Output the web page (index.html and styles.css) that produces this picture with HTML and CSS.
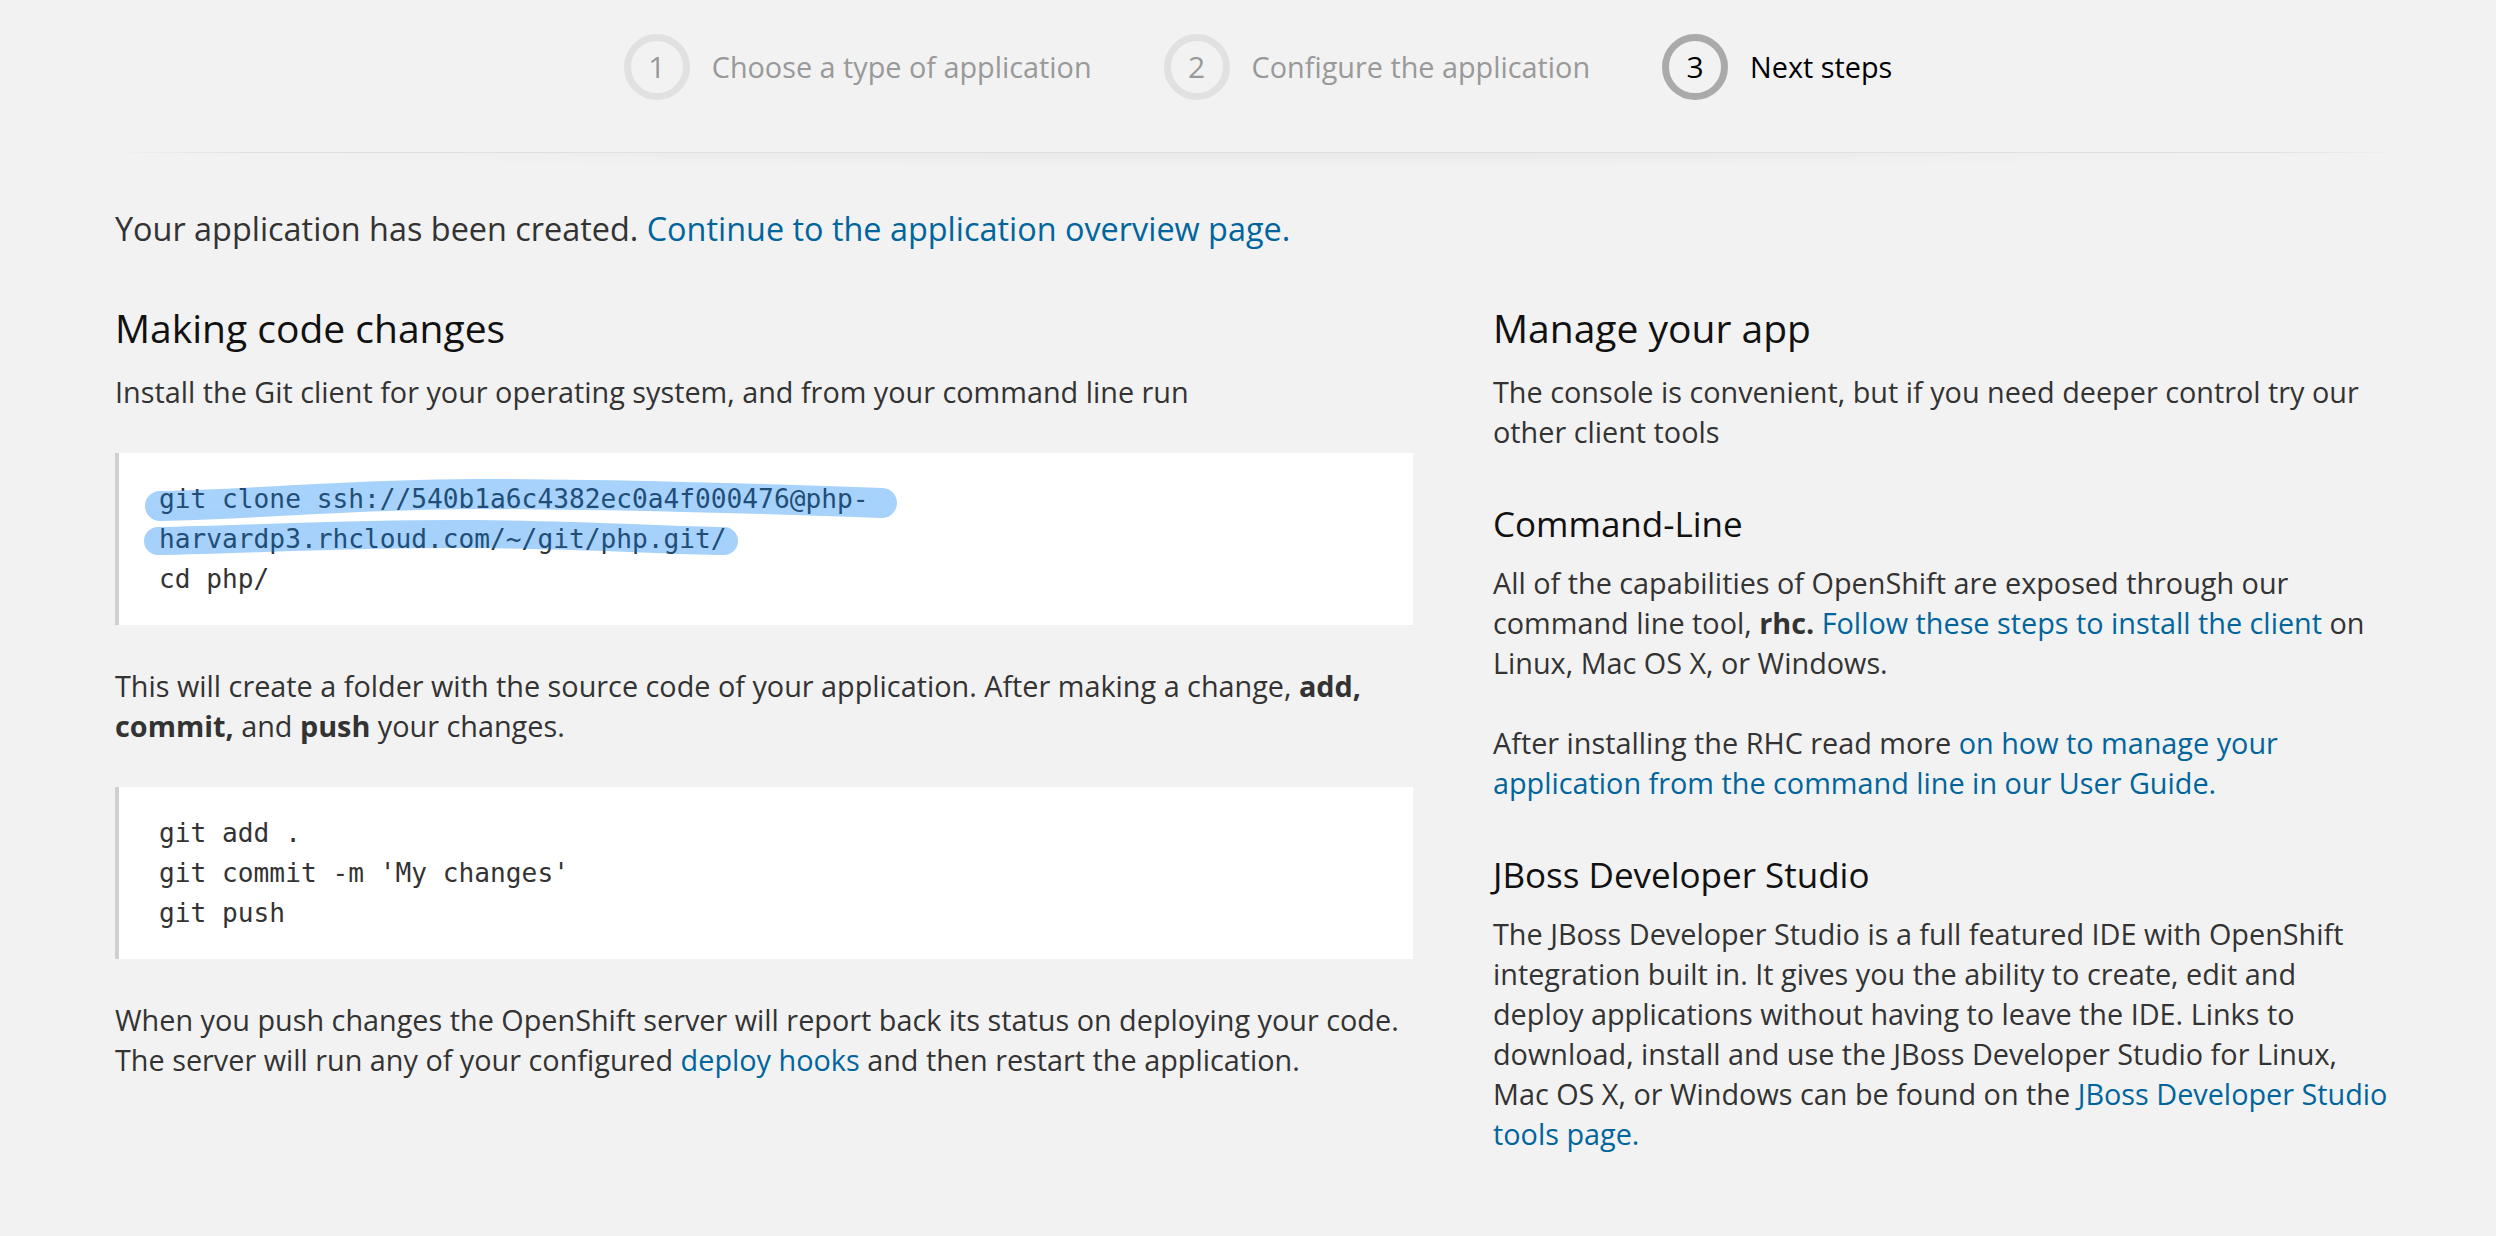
FILE: index.html
```html
<!DOCTYPE html>
<html lang="en">
<head>
<meta charset="utf-8">
<title>Next steps</title>
<link rel="stylesheet" href="styles.css">
</head>
<body>
<header class="wizard">
  <ol class="steps">
    <li class="step"><span class="num">1</span><span class="label">Choose a type of application</span></li>
    <li class="step"><span class="num">2</span><span class="label">Configure the application</span></li>
    <li class="step active"><span class="num">3</span><span class="label">Next steps</span></li>
  </ol>
</header>
<div class="divider"></div>
<main class="page">
  <p class="intro">Your application has been created. <a href="#">Continue to the application overview page.</a></p>
  <div class="cols">
    <section class="col-main">
      <h3>Making code changes</h3>
      <p>Install the Git client for your operating system, and from your command line run</p>
<pre class="code">git clone ssh://540b1a6c4382ec0a4f000476@php-
harvardp3.rhcloud.com/~/git/php.git/
cd php/<svg class="marker" viewBox="0 0 1294 172" width="1294" height="172" aria-hidden="true"><g opacity="0.35" fill="none" stroke="#007ef3" stroke-linecap="round" stroke-linejoin="round"><path stroke-width="30" d="M41 53 C140 51 240 41 356 41 S 660 46 763 50"/><path stroke-width="28" d="M39 88 C140 86 240 80 356 81 S 540 87 605 88"/></g></svg></pre>
      <p>This will create a folder with the source code of your application. After making a change, <b>add,</b> <b>commit,</b> and <b>push</b> your changes.</p>
<pre class="code">git add .
git commit -m 'My changes'
git push</pre>
      <p>When you push changes the OpenShift server will report back its status on deploying your code. The server will run any of your configured <a href="#">deploy hooks</a> and then restart the application.</p>
    </section>
    <aside class="col-side">
      <h3>Manage your app</h3>
      <p>The console is convenient, but if you need deeper control try our other client tools</p>
      <h4>Command-Line</h4>
      <p>All of the capabilities of OpenShift are exposed through our command line tool, <b>rhc.</b> <a href="#">Follow these steps to install the client</a> on Linux, Mac OS X, or Windows.</p>
      <p>After installing the RHC read more <a href="#">on how to manage your application from the command line in our User Guide.</a></p>
      <h4>JBoss Developer Studio</h4>
      <p>The JBoss Developer Studio is a full featured IDE with OpenShift integration built in. It gives you the ability to create, edit and deploy applications without having to leave the IDE. Links to download, install and use the JBoss Developer Studio for Linux, Mac OS X, or Windows can be found on the <a href="#">JBoss Developer Studio tools page.</a></p>
    </aside>
  </div>
</main>
</body>
</html>
```
FILE: styles.css
```css
html, body {
  margin: 0;
  padding: 0;
}

body {
  background: #f2f2f2;
  font-family: "Open Sans", "Noto Sans", sans-serif;
  color: #333;
}

a {
  color: #00659c;
  text-decoration: none;
}

b {
  font-weight: 700;
  color: #333;
}

/* ---------- wizard steps ---------- */
.wizard {
  padding: 34px 0 52px;
}

.steps {
  list-style: none;
  margin: 0;
  padding: 0 0 0 20px;
  display: flex;
  justify-content: center;
  gap: 72px;
}

.step {
  display: flex;
  align-items: center;
  gap: 22px;
  font-size: 28.8px;
  line-height: 40px;
  color: #999;
}

.num {
  box-sizing: border-box;
  width: 66px;
  height: 66px;
  border: 7px solid #e1e1e1;
  border-radius: 50%;
  display: flex;
  align-items: center;
  justify-content: center;
  font-size: 30px;
  line-height: 1;
  color: #999;
}

.step.active {
  color: #000;
}

.step.active .num {
  border-color: #aaa;
  color: #000;
}

.divider {
  margin: 0 92px 0 111px;
  height: 1px;
  background: linear-gradient(to right, rgba(225,225,225,0), #e0e0e0 6%, #e0e0e0 94%, rgba(225,225,225,0));
  position: relative;
}

.divider::after {
  content: "";
  position: absolute;
  left: 0;
  right: 0;
  top: 1px;
  height: 14px;
  background: radial-gradient(ellipse 50% 100% at 50% 0, rgba(0,0,0,0.04), rgba(0,0,0,0));
}

/* ---------- page ---------- */
.page {
  padding: 55px 0 40px 115px;
}

.intro {
  font-size: 32.4px;
  line-height: 40px;
  margin: 0 0 56px;
}

.cols {
  display: grid;
  grid-template-columns: 1298px 898px;
  column-gap: 80px;
  align-items: start;
}

h3 {
  font-size: 39px;
  line-height: 48px;
  font-weight: 400;
  color: #111;
  margin: 0 0 20px;
}

h4 {
  font-size: 35px;
  line-height: 44px;
  font-weight: 400;
  color: #111;
  margin: 50px 0 17px;
}

p {
  font-size: 28.8px;
  line-height: 40px;
  margin: 0 0 40px;
}

.col-main p {
  margin-bottom: 41px;
}

.code {
  position: relative;
  margin: 0 0 41px;
  background: #fff;
  border-left: 4px solid #d0d0d0;
  padding: 26px 40px;
  font-family: "DejaVu Sans Mono", "Liberation Mono", monospace;
  font-size: 26.2px;
  line-height: 40px;
  color: #333;
  white-space: pre;
}

.marker {
  position: absolute;
  left: 0;
  top: 0;
  pointer-events: none;
  overflow: visible;
}
```
